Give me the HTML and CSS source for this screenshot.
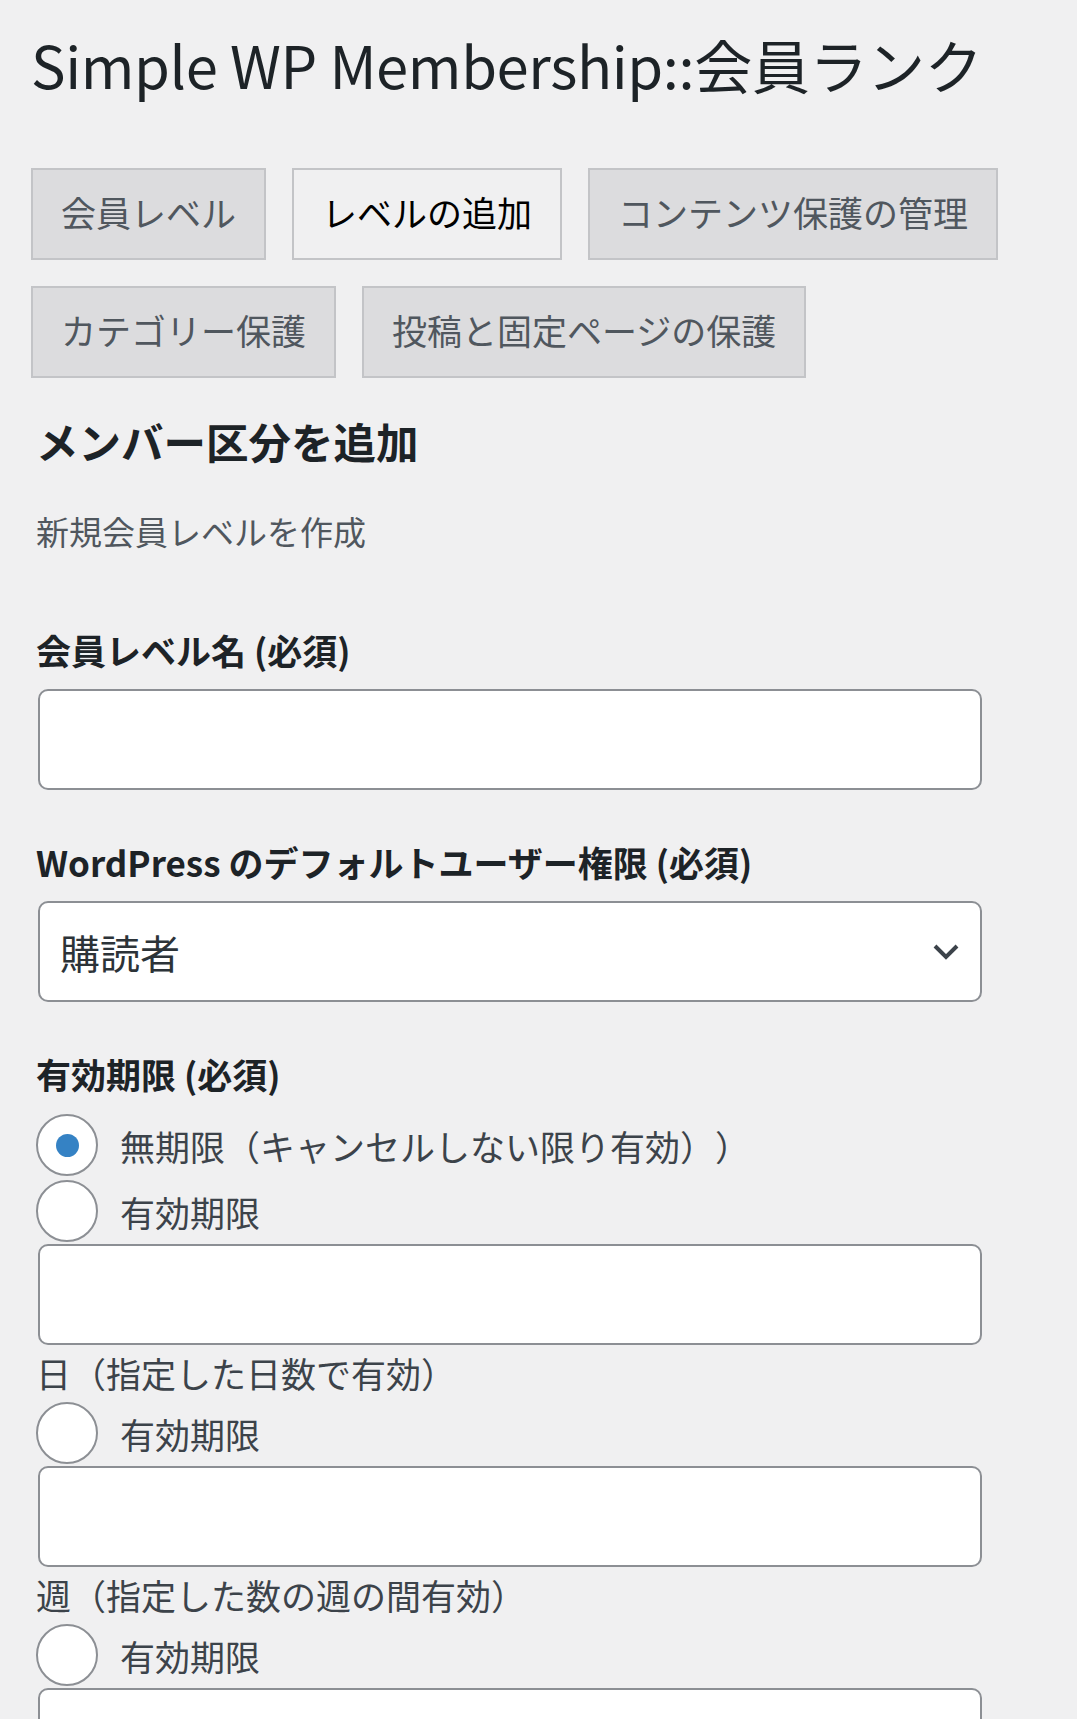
FILE: index.html
```html
<!DOCTYPE html>
<html lang="ja">
<head>
    <meta charset="UTF-8">
    <meta name="viewport" content="width=device-width, initial-scale=1.0">
    <title>会員ランク ‹ Simple WP Membership</title>
    <link rel="stylesheet" href="styles.css">
</head>
<body>

    <div class="wrap">
        <h1 class="page-title">Simple WP Membership::会員ランク</h1>

        <!-- Tabs -->
        <nav class="nav-tabs">
            <a href="#" class="nav-tab">会員レベル</a>
            <a href="#" class="nav-tab nav-tab-active">レベルの追加</a>
            <a href="#" class="nav-tab">コンテンツ保護の管理</a>
            <a href="#" class="nav-tab">カテゴリー保護</a>
            <a href="#" class="nav-tab">投稿と固定ページの保護</a>
        </nav>

        <!-- Add level form -->
        <form class="level-form" onsubmit="return false;">
            <h2 class="form-title">メンバー区分を追加</h2>
            <p class="form-desc">新規会員レベルを作成</p>

            <div class="field">
                <label class="field-label" for="alias">会員レベル名 (必須)</label>
                <input type="text" id="alias" class="text-input">
            </div>

            <div class="field field-select">
                <label class="field-label" for="role">WordPress のデフォルトユーザー権限 (必須)</label>
                <div class="select-wrap">
                    <select id="role" class="select-input">
                        <option>購読者</option>
                        <option>寄稿者</option>
                        <option>投稿者</option>
                        <option>編集者</option>
                    </select>
                    <svg class="select-arrow" width="28" height="18" viewBox="0 0 28 18">
                        <polyline points="3,3 14,14 25,3" fill="none" stroke="#3c434a" stroke-width="4"/>
                    </svg>
                </div>
            </div>

            <div class="field field-expiry">
                <label class="field-label">有効期限 (必須)</label>

                <label class="radio-row">
                    <input type="radio" name="expiry" class="radio" checked>
                    <span>無期限（キャンセルしない限り有効））</span>
                </label>

                <label class="radio-row">
                    <input type="radio" name="expiry" class="radio">
                    <span>有効期限</span>
                </label>
                <input type="text" class="text-input">
                <div class="suffix">日（指定した日数で有効）</div>

                <label class="radio-row">
                    <input type="radio" name="expiry" class="radio">
                    <span>有効期限</span>
                </label>
                <input type="text" class="text-input">
                <div class="suffix">週（指定した数の週の間有効）</div>

                <label class="radio-row">
                    <input type="radio" name="expiry" class="radio">
                    <span>有効期限</span>
                </label>
                <input type="text" class="text-input">
            </div>
        </form>
    </div>

</body>
</html>
```

FILE: styles.css
```css
body {
    margin: 0;
    font-family: "Noto Sans CJK JP", "Noto Sans", sans-serif;
    background-color: #f0f0f1;
    color: #3c434a;
    text-spacing-trim: space-all;
}

.wrap {
    padding: 27px 0 0 31px;
}

.page-title {
    margin: 0;
    font-size: 58px;
    font-weight: 400;
    line-height: 75px;
    letter-spacing: -0.4px;
    color: #1d2327;
}

.nav-tabs {
    display: flex;
    flex-wrap: wrap;
    gap: 26px;
    margin-top: 66px;
    width: 1000px;
}

.nav-tab {
    display: block;
    height: 88px;
    line-height: 83px;
    padding: 0 28px;
    border: 2px solid #c3c4c7;
    background-color: #dcdcde;
    color: #50575e;
    font-size: 35px;
    text-decoration: none;
    white-space: nowrap;
}

.nav-tab-active {
    background-color: #f0f0f1;
    color: #000;
}

.level-form {
    padding-left: 5px;
}

.form-title {
    margin: 33px 0 0;
    font-size: 42.5px;
    line-height: 60px;
    font-weight: 700;
    color: #1d2327;
}

.form-desc {
    margin: 36px 0 0;
    font-size: 33px;
    line-height: 49px;
    color: #50575e;
}

.field-label {
    display: block;
    font-size: 35px;
    line-height: 49px;
    font-weight: 600;
    color: #1d2327;
}

.field {
    margin-top: 47px;
}

.field:first-of-type {
    margin-top: 69px;
}

.text-input,
.select-input {
    display: block;
    box-sizing: border-box;
    width: 944px;
    height: 101px;
    margin: 0 0 0 2px;
    border: 2px solid #8c8f94;
    border-radius: 10px;
    background-color: #fff;
    font-family: inherit;
    font-size: 40px;
    color: #2c3338;
}

.field-label + .text-input,
.field-label + .select-wrap {
    margin-top: 15px;
}

.select-wrap {
    position: relative;
    width: 948px;
}

.select-input {
    appearance: none;
    -webkit-appearance: none;
    padding: 0 70px 0 20px;
}

.select-arrow {
    position: absolute;
    right: 24px;
    top: 42px;
    pointer-events: none;
}

/* expiry radios */
.field-expiry .field-label {
    margin-bottom: 14px;
}

.radio-row {
    display: flex;
    align-items: center;
    height: 66px;
    font-size: 35px;
    color: #3c434a;
}

.radio {
    appearance: none;
    -webkit-appearance: none;
    box-sizing: border-box;
    width: 62px;
    height: 62px;
    margin: 0 22px 0 0;
    border: 2px solid #8c8f94;
    border-radius: 50%;
    background-color: #fff;
    display: flex;
    align-items: center;
    justify-content: center;
}

.radio:checked::before {
    content: "";
    width: 23px;
    height: 23px;
    border-radius: 50%;
    background-color: #3582c4;
}

.suffix {
    height: 55px;
    line-height: 55px;
    font-size: 35px;
    color: #3c434a;
}
```
